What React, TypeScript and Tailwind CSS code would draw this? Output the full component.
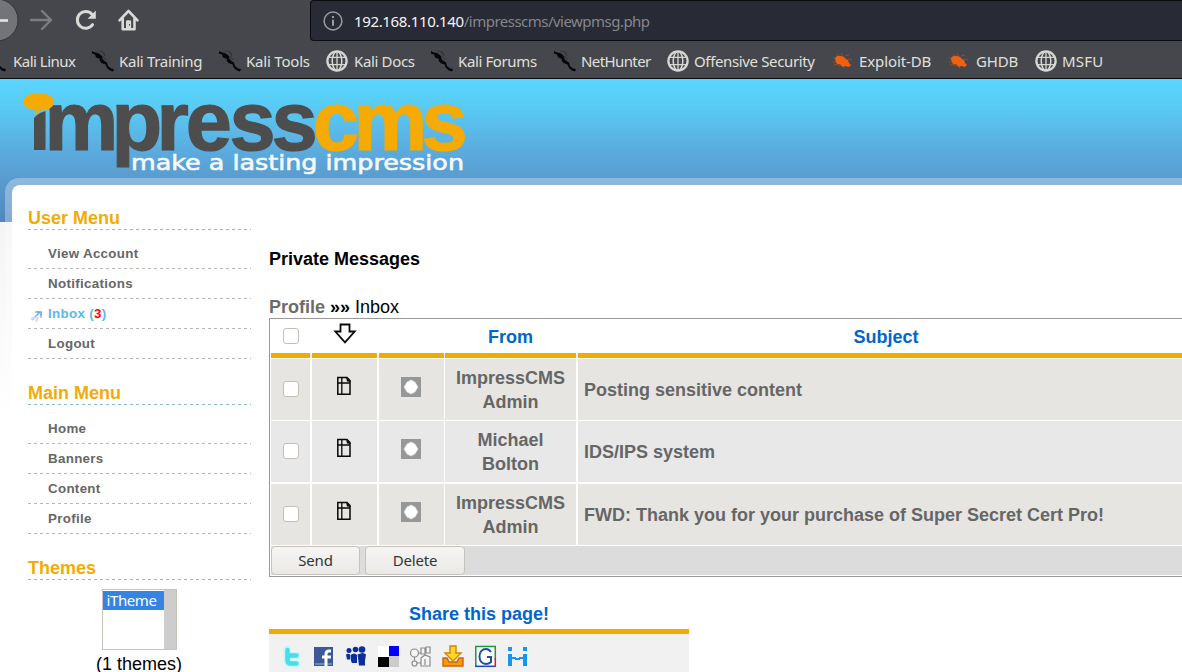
import React from "react";

const chromeFont = "font-['Noto_Sans',sans-serif]";

function Dragon() {
  return (
    <svg width="24" height="22" viewBox="0 0 24 22" className="shrink-0">
      <path d="M1 1l3 1.500 3 .5 4 3 .5 3 2 2 2.500 1.500 1 3.500 3 2.500 3 .5-1 2.500-3-1-3-2.500-1.500-3.500-4-1.500-2-2.500.5-1.500-4-1.500-1-3-3-1z" fill="#060606" />
      <path d="M7.500 1c3-.5 5.500 2 6.500 5M11 1l3 3M12 6l3 4" stroke="#2b2d32" strokeWidth=".8" fill="none" />
    </svg>
  );
}

function Globe() {
  return (
    <svg width="22" height="22" viewBox="0 0 22 22" className="shrink-0" fill="none" stroke="#d6d6d3">
      <circle cx="11" cy="11" r="9.6" strokeWidth="2.3" />
      <ellipse cx="11" cy="11" rx="4.8" ry="9.4" strokeWidth="1.5" />
      <path d="M11 2v18M2.5 7.3h17M2.5 14.7h17" strokeWidth="1.3" />
    </svg>
  );
}

function Bug() {
  return (
    <svg width="22" height="22" viewBox="0 0 22 22" className="shrink-0">
      <path d="M1 8l5 1M5 4l3 4M9 3l2 4M2 15l6-1M9 15l3 3M16 9l4 1M13 6l4-1M4 12l-3 0M6 16l3-1" stroke="#a04c25" strokeWidth="0.9" />
      <path d="M3 8q2-3 6-2l3 1 2 2 2 1 1 3 2 2-2 2-4-1-2 1-3-3-3 0q-2-3-2-6z" fill="#f0600f" />
    </svg>
  );
}

function Bookmark({ label, icon, box, text }: { label: string; icon: React.ReactNode; box: string; text: string }) {
  return (
    <div className={`flex h-full shrink-0 items-center ${box}`}>
      {icon}
      <span className={`whitespace-nowrap ${text}`}>{label}</span>
    </div>
  );
}

function BrowserChrome() {
  return (
    <div className={`flex h-[79px] flex-col overflow-hidden border-b border-[#0c0c0d] bg-[#45474d] ${chromeFont}`}>
      <div className="flex h-[42px] shrink-0">
        <svg width="150" height="42" viewBox="0 0 150 42" fill="none" className="shrink-0">
          <circle cx="-3" cy="20" r="21" fill="#737477" stroke="#33353a" />
          <path d="M0 20.5h8" stroke="#e4e4e1" strokeWidth="2.6" />
          <path d="M31 20h20M42 11l9 9-9 9" stroke="#7c7d81" strokeWidth="2.4" strokeLinecap="round" strokeLinejoin="round" />
          <path d="M92 14.2a8.4 8.4 0 1 0 .6 10.5" stroke="#d9d9d6" strokeWidth="3" strokeLinecap="round" />
          <path d="M95.8 10.5v8.2h-8.2z" fill="#d9d9d6" />
          <path d="M119.5 20.3l9-9.3 9 9.3M122.7 18v11.2h11.8V18" stroke="#d9d9d6" strokeWidth="2.6" strokeLinecap="round" strokeLinejoin="round" />
          <path d="M126 29v-7.5a1.3 1.3 0 0 1 1.3-1.3h2.5a1.3 1.3 0 0 1 1.3 1.3V29z" fill="#d9d9d6" />
          <path d="M129 24h1v1.5h-1z" fill="#45474d" />
        </svg>
        <div className="ml-[160px] flex h-[41px] flex-1 items-center rounded-l-[4px] border border-r-0 border-[#0c0c0d] bg-[#282a35] pl-3">
          <svg width="20" height="20" viewBox="0 0 20 20" fill="none" className="shrink-0">
            <circle cx="10" cy="10" r="8.9" stroke="#9b9ca0" strokeWidth="1.5" />
            <path d="M10 8.8v6M10 5v2" stroke="#9b9ca0" strokeWidth="2" />
          </svg>
          <span className="ml-[11px] whitespace-nowrap text-[15px] leading-5 tracking-[-0.35px] text-[#f5f5f5]">
            192.168.110.140<span className="tracking-[-0.52px] text-[#85868d]">/impresscms/viewpmsg.php</span>
          </span>
        </div>
      </div>
      <div className="flex h-[38px] shrink-0 items-center overflow-hidden text-[15px] leading-5 text-[#e0e0dd]">
        <Bookmark label="Kali Linux" icon={<span className="flex w-[7px] shrink-0 justify-end overflow-hidden"><Dragon /></span>} box="w-[91px]" text="ml-[6px] tracking-[-0.5px]" />
        <Bookmark label="Kali Training" icon={<Dragon />} box="w-[127px]" text="ml-[4px] tracking-[-0.28px]" />
        <Bookmark label="Kali Tools" icon={<Dragon />} box="w-[108px]" text="ml-[4px] tracking-[-0.2px]" />
        <Bookmark label="Kali Docs" icon={<Globe />} box="w-[104px]" text="ml-[6px] tracking-[-0.35px]" />
        <Bookmark label="Kali Forums" icon={<Dragon />} box="w-[123px]" text="ml-[4px] tracking-[-0.38px]" />
        <Bookmark label="NetHunter" icon={<Dragon />} box="w-[114px]" text="ml-[4px] tracking-[-0.6px]" />
        <Bookmark label="Offensive Security" icon={<Globe />} box="w-[165px]" text="ml-[5px] tracking-[-0.36px]" />
        <Bookmark label="Exploit-DB" icon={<Bug />} box="w-[116px]" text="ml-[5px] tracking-[-0.1px]" />
        <Bookmark label="GHDB" icon={<Bug />} box="w-[87px]" text="ml-[6px] tracking-[-0.2px]" />
        <Bookmark label="MSFU" icon={<Globe />} box="" text="ml-[5px] tracking-[0.2px]" />
      </div>
    </div>
  );
}

function Logo() {
  return (
    <svg width="480" height="99" viewBox="0 79 480 99" className="block overflow-visible">
      <g fontFamily="'Liberation Sans', Arial, sans-serif" fontWeight="700" fontSize="83" strokeWidth="1.2">
        <text x="44.5 111.5 156.5 185.7 229.5 271.5" y="149.5" fill="#4d4d4d" stroke="#4d4d4d">mpress</text>
        <text x="312.7 353.5 421.5" y="149.5" fill="#f5ab03" stroke="#f5ab03">cms</text>
      </g>
      <path d="M34 150V118q4-5 11.500-7V150z" fill="#4d4d4d" />
      <path d="M39 93c8.500 0 15 4 15 9s-6 8.500-14 8.500c-1 2-3 3.500-6 4.500 1-1.500 1.500-3 1-5-6.500-.5-11.500-4-11.500-8.500 0-5 7-8.500 15.500-8.500z" fill="#f5ab03" />
      <text x="131" y="170" fill="#f4f9fc" stroke="#f4f9fc" strokeWidth=".6" fontFamily="'DejaVu Sans', sans-serif" fontSize="21" textLength="333" lengthAdjust="spacingAndGlyphs">make a lasting impression</text>
    </svg>
  );
}

function MenuHeading({ children }: { children: React.ReactNode }) {
  return (
    <>
      <h2 className="h-[22px] pt-px text-[18px] font-bold leading-[21px] text-[#f3ab06]">{children}</h2>
      <div className="h-px bg-[repeating-linear-gradient(90deg,#8bb9dc_0_3px,transparent_3px_6px)]" />
    </>
  );
}

function MenuItem({ children, active }: { children: React.ReactNode; active?: boolean }) {
  return (
    <li>
      <div className={`flex h-[29px] items-center text-[13.33px] font-bold tracking-[0.32px] ${active ? "text-[#5cb9e6]" : "text-[#666]"}`}>
        <span className="w-5 shrink-0">
          {active && (
            <svg width="14" height="14" viewBox="0 0 14 14" className="mt-1 ml-0.5" fill="none">
              <path d="M2 11l8-8M5 3h6v6" stroke="#9cc6ee" strokeWidth="1.8" />
              <path d="M1 10l4-2M6 13l2-5" stroke="#cfe0f7" strokeWidth="2.2" />
              <path d="M7 3h4v4M7 6l3-3" stroke="#6fa5dc" />
            </svg>
          )}
        </span>
        <span className="whitespace-pre">{children}</span>
      </div>
      <div className="h-px bg-[repeating-linear-gradient(90deg,#b5b5b5_0_3px,transparent_3px_6px)]" />
    </li>
  );
}

function Sidebar() {
  return (
    <aside className="ml-4 w-[223px] shrink-0 pt-[22px]">
      <MenuHeading>User Menu</MenuHeading>
      <ul className="pt-[9px]">
        <MenuItem>View Account</MenuItem>
        <MenuItem>Notifications</MenuItem>
        <MenuItem active>Inbox (<span className="text-[#f00]">3</span>)</MenuItem>
        <MenuItem>Logout</MenuItem>
      </ul>
      <div className="h-[23px]" />
      <MenuHeading>Main Menu</MenuHeading>
      <ul className="pt-[9px]">
        <MenuItem>Home</MenuItem>
        <MenuItem>Banners</MenuItem>
        <MenuItem>Content</MenuItem>
        <MenuItem>Profile</MenuItem>
      </ul>
      <div className="h-[23px]" />
      <MenuHeading>Themes</MenuHeading>
      <div className="mt-[9px] flex flex-col items-center pr-px">
        <div className="flex h-[61px] w-[75px] border border-[#c8c3bc] bg-white">
          <div className="flex-1 pt-px">
            <div className={`h-[19px] bg-[#3584e4] pl-1 text-[15px] leading-[18px] tracking-[-0.4px] text-white ${chromeFont}`}>iTheme</div>
          </div>
          <div className="w-3 bg-[#cdcdcd]" />
        </div>
        <div className="mt-1 text-[18px] leading-5">(1 themes)</div>
      </div>
    </aside>
  );
}

function Check() {
  return <span className="block h-4 w-4 rounded-[3px] border border-[#c3beb7] bg-white" />;
}

function Doc() {
  return (
    <svg width="16" height="20" viewBox="0 0 16 20" fill="none" stroke="#080808">
      <path d="M1.800 1.500h9.200l3 3v13.700H1.800z" strokeWidth="1.500" />
      <path d="M5.800 1.500v16.700M1.800 7h12" strokeWidth="1.300" />
      <path d="M10 1l5 5-4-.5z" fill="#080808" stroke="none" />
    </svg>
  );
}

function Status() {
  return (
    <svg width="20" height="20" viewBox="0 0 20 20">
      <path d="M0 0h20v20H0z" fill="#969796" />
      <path d="M10 3l4 2 3 5-3 5-4 2-4-2-3-5 3-5z" fill="#fff" stroke="#cfe0e0" strokeWidth=".7" />
    </svg>
  );
}

const columns = "grid grid-cols-[41px_67px_66px_133px_1fr] font-bold";

function Row({ from, subject, rowStyle }: { from: [string, string]; subject: string; rowStyle: string }) {
  return (
    <div className={`${columns} text-[#666]`}>
      <div className={`mr-[2px] flex items-center justify-center pb-[2px] ${rowStyle}`}><Check /></div>
      <div className={`mr-[2px] flex items-center justify-center pb-[7px] pr-px ${rowStyle}`}><Doc /></div>
      <div className={`mr-px flex items-center justify-center pb-[5px] pr-px ${rowStyle}`}><Status /></div>
      <div className={`mr-[2px] flex flex-col justify-center pt-[2px] text-center leading-[23.4px] ${rowStyle}`}>
        <span>{from[0]}</span>
        <span>{from[1]}</span>
      </div>
      <div className={`flex items-center whitespace-nowrap pl-[6px] pt-[2px] ${rowStyle}`}>{subject}</div>
    </div>
  );
}

const headCell = "flex h-[38px] items-center justify-center border-b-[5px] border-[#f0ab00]";

function MessageTable() {
  return (
    <div className="h-[259px] w-[920px] border border-[#999] p-px text-[18px]">
      <div className={`${columns} text-[#0066cc]`}>
        <div className={`mr-[2px] pb-px ${headCell}`}><Check /></div>
        <div className={`mr-[2px] pb-[5px] ${headCell}`}>
          <svg width="24" height="22" viewBox="0 0 24 22">
            <path d="M7.500 1.500h9v7h5.200L12 19.300 2.300 8.500h5.200z" fill="#fff" stroke="#0a0a0a" strokeWidth="1.800" />
          </svg>
        </div>
        <div className={`mr-px ${headCell}`} />
        <div className={`mr-[2px] pt-px ${headCell}`}>From</div>
        <div className={`pl-[7px] pt-px ${headCell}`}>Subject</div>
      </div>
      <div className="mt-px flex flex-col">
        <Row from={["ImpressCMS", "Admin"]} subject="Posting sensitive content" rowStyle="h-[61px] bg-[#e6e5e1]" />
        <div className="h-px" />
        <Row from={["Michael", "Bolton"]} subject="IDS/IPS system" rowStyle="h-[61px] bg-[#e8e8e8]" />
        <div className="h-[2px]" />
        <Row from={["ImpressCMS", "Admin"]} subject="FWD: Thank you for your purchase of Super Secret Cert Pro!" rowStyle="h-[61px] bg-[#e6e5e1]" />
      </div>
      <div className={`mt-px flex h-[29px] gap-[5px] bg-[#dcdcdc] text-[15px] tracking-[-0.2px] text-[#303638] ${chromeFont}`}>
        <button className="h-[29px] w-[89px] rounded-[4px] border border-[#c7c2bc] bg-linear-to-b from-[#f6f5f4] to-[#ebe9e7]">Send</button>
        <button className="h-[29px] w-[100px] rounded-[4px] border border-[#c7c2bc] bg-linear-to-b from-[#f6f5f4] to-[#ebe9e7]">Delete</button>
      </div>
    </div>
  );
}

function ShareIcons() {
  return (
    <svg width="270" height="38" viewBox="269 634 270 38" className="block">
      <path d="M287 649v11q0 4 4 4h6M287 655.5h10" stroke="#c4f7fb" strokeWidth="7" strokeLinecap="round" fill="none" />
      <path d="M287.500 650v10q0 3.500 3.500 3.500h5.500M288 655.500h8.500" stroke="#49dce9" strokeWidth="4.500" strokeLinecap="round" fill="none" />
      <path d="M314 647h19v19h-19z" fill="#3b5998" />
      <path d="M315 663h17v2h-17z" fill="#7187b5" />
      <path d="M331 651h-2q-3 0-3 3v12M322 657h9" stroke="#fff" strokeWidth="3" fill="none" />
      <g fill="#0b2d9d">
        <circle cx="349" cy="650.5" r="2.500" /><circle cx="355.500" cy="649.500" r="2.800" /><circle cx="362" cy="649.500" r="3.300" />
        <path d="M346 654.500q2-1.500 4 0v5h-3zM350.500 655q4-3 6.500 0v8h-5q-1.500-2-1.500-8zM357.500 654.500q6-3 8.500 0l-1 6v5h-6z" />
      </g>
      <path d="M378 646h11v11h-11z" fill="#fff" /><path d="M389 646h10v10h-10z" fill="#00f" />
      <path d="M378 657h11v10h-11z" fill="#000" /><path d="M389 656h10v11h-10z" fill="#ccc" />
      <g fill="#f5f5f5" stroke="#8b8b8b" strokeWidth="1.200">
        <circle cx="414.500" cy="653" r="4" /><path d="M414.500 657v4" /><circle cx="414.500" cy="663.500" r="2.500" />
        <path d="M421 648h4v6h-4zM426 647h4v6h-4zM421 658l4-3 5 2v9h-9zM418 653h3M417 663h4M425 659v6" />
      </g>
      <path d="M443 658h4l2 4h8l2-4h4v8h-20z" fill="#f59a11" stroke="#cb6506" strokeWidth="1.400" />
      <path d="M450 646h6v7h5l-8 8-8-8h5z" fill="#ffd91b" stroke="#d88208" strokeWidth="1.400" />
      <path d="M475 646h21v21h-21z" fill="#fff" />
      <path d="M475.800 667v-20.500H496" stroke="#159b3b" strokeWidth="1.500" fill="none" />
      <path d="M475 666.300h20.500" stroke="#1749ba" strokeWidth="1.500" /><path d="M495.300 647v13" stroke="#159b3b" strokeWidth="1.500" /><path d="M495.300 658v9" stroke="#dc2020" strokeWidth="1.500" />
      <path d="M491 652q-2-3-5-3c-4 0-6.500 3-6.500 7.500s2.500 7.500 6.500 7.500q3 0 5-2v-5h-4" fill="none" stroke="#294c9f" strokeWidth="2" />
      <g fill="#1697ef"><path d="M508 647h4v4h-4zM523 647h4v4h-4zM508 654h4v12h-4zM523 654h4v12h-4zM512 657h4v2h-4zM515 658h5v2h-5zM519 657h4v2h-4z" /></g>
    </svg>
  );
}

export default function App() {
  return (
    <div className="flex h-[672px] w-full flex-col overflow-hidden bg-white font-['Liberation_Sans',Arial,sans-serif] text-black">
      <BrowserChrome />
      <div className="flex flex-1 flex-col overflow-hidden bg-[linear-gradient(180deg,#5ad4fe_0,#59cff8_20px,#5ba6da_80px,#5a9ccf_99px,#5187bb_143px,#f4f4f4_143px,#ffffff_340px)]">
        <header className="h-[99px] shrink-0">
          <Logo />
        </header>
        <div className="ml-[5px] flex min-h-0 flex-1 rounded-tl-[14px] bg-white/30 pl-[7px] pt-[7px]">
          <div className="flex flex-1 overflow-hidden rounded-tl-[8px] bg-white">
            <Sidebar />
            <main className="ml-[18px] w-[920px] shrink-0 text-[18px]">
              <h1 className="mt-[63px] h-[22px] font-bold leading-[22px]">Private Messages</h1>
              <div className="mt-[26px] h-[22px] whitespace-pre leading-[22px]">
                <b className="text-[#6c6c6c]">Profile</b> <b>»»</b> Inbox
              </div>
              <MessageTable />
              <section className="mt-[26px] w-[420px]">
                <h2 className="h-[31px] border-b-[5px] border-[#f0ab00] text-center font-bold leading-[22px] text-[#0066cc]">Share this page!</h2>
                <div className="h-[60px] bg-[#f1f1f1]"><ShareIcons /></div>
              </section>
            </main>
          </div>
        </div>
      </div>
    </div>
  );
}
